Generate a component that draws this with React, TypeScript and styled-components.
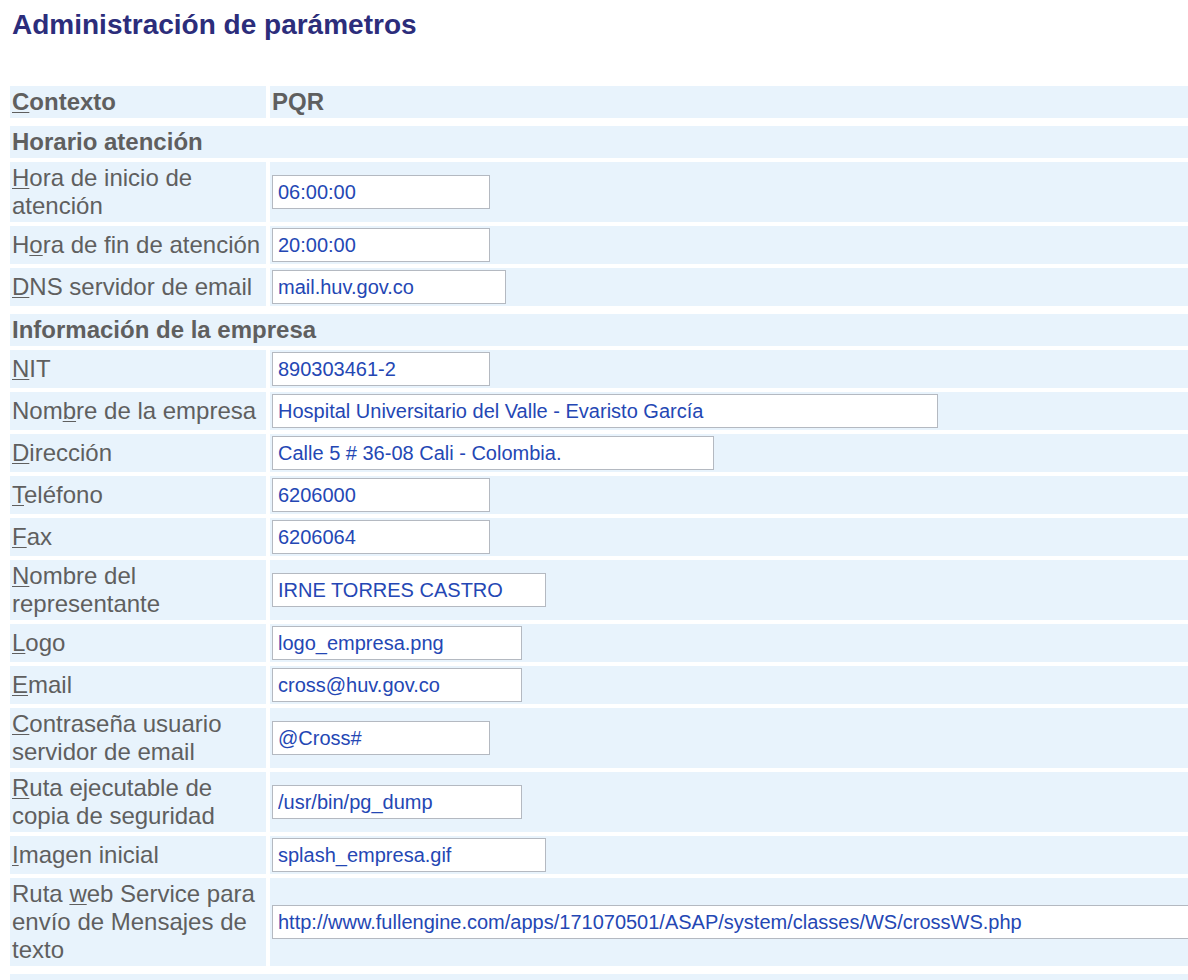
import React from 'react';
import styled, { createGlobalStyle } from 'styled-components';

const Global = createGlobalStyle`
  html, body { margin: 0; padding: 0; background: #ffffff; overflow: hidden; }
  body { font-family: "Liberation Sans", Arial, Helvetica, sans-serif; }
`;

const Page = styled.div`
  width: 1178px;
  height: 980px;
  padding: 9px 0 0 10px;
  overflow: hidden;
`;

const Title = styled.h1`
  margin: 0 0 45px 2px;
  font-size: 28px;
  line-height: 32px;
  font-weight: bold;
  color: #2c2d7b;
`;

const Grid = styled.div`
  display: grid;
  grid-template-columns: 256px minmax(0, 1fr);
  gap: 4px;
  width: 1230px;
`;

const Cell = styled.div<{ $bold?: boolean; $span?: boolean; $section?: boolean }>`
  display: flex;
  align-items: center;
  padding: 2px;
  min-height: 28px;
  background: #e8f3fc;
  color: #5f5f5f;
  font-size: 24px;
  line-height: 28px;
  font-weight: ${(p) => (p.$bold ? 'bold' : 'normal')};
  grid-column: ${(p) => (p.$span ? '1 / -1' : 'auto')};
  margin-top: ${(p) => (p.$section ? '4px' : '0')};
  overflow: hidden;
`;

const Key = styled.span`
  text-decoration: underline;
  text-underline-offset: 2px;
  text-decoration-thickness: 1px;
`;

const Field = styled.input<{ $w: number }>`
  box-sizing: border-box;
  flex: none;
  width: ${(p) => p.$w}px;
  height: 34px;
  margin: 0;
  padding: 0 5px;
  border: 1px solid #b4b9c1;
  border-radius: 0;
  background: #ffffff;
  color: #2447b4;
  font-family: "Liberation Sans", Arial, Helvetica, sans-serif;
  font-size: 20px;
  outline: none;
`;

const Footer = styled.div`
  grid-column: 1 / -1;
  margin-top: 4px;
  height: 40px;
  background: #e8f3fc;
`;

type Row = { pre: string; key: string; post: string; value: string; w: number };

const rowsA: Row[] = [
  { pre: '', key: 'H', post: 'ora de inicio de atención', value: '06:00:00', w: 218 },
  { pre: 'H', key: 'o', post: 'ra de fin de atención', value: '20:00:00', w: 218 },
  { pre: '', key: 'D', post: 'NS servidor de email', value: 'mail.huv.gov.co', w: 234 },
];

const rowsB: Row[] = [
  { pre: '', key: 'N', post: 'IT', value: '890303461-2', w: 218 },
  { pre: 'Nom', key: 'b', post: 're de la empresa', value: 'Hospital Universitario del Valle - Evaristo García', w: 666 },
  { pre: '', key: 'D', post: 'irección', value: 'Calle 5 # 36-08 Cali - Colombia.', w: 442 },
  { pre: '', key: 'T', post: 'eléfono', value: '6206000', w: 218 },
  { pre: '', key: 'F', post: 'ax', value: '6206064', w: 218 },
  { pre: '', key: 'N', post: 'ombre del representante', value: 'IRNE TORRES CASTRO', w: 274 },
  { pre: '', key: 'L', post: 'ogo', value: 'logo_empresa.png', w: 250 },
  { pre: '', key: 'E', post: 'mail', value: 'cross@huv.gov.co', w: 250 },
  { pre: '', key: 'C', post: 'ontraseña usuario servidor de email', value: '@Cross#', w: 218 },
  { pre: '', key: 'R', post: 'uta ejecutable de copia de seguridad', value: '/usr/bin/pg_dump', w: 250 },
  { pre: '', key: 'I', post: 'magen inicial', value: 'splash_empresa.gif', w: 274 },
  {
    pre: 'Ruta ',
    key: 'w',
    post: 'eb Service para envío de Mensajes de texto',
    value: 'http://www.fullengine.com/apps/171070501/ASAP/system/classes/WS/crossWS.php',
    w: 950,
  },
];

const renderRow = (r: Row) => (
  <React.Fragment key={r.pre + r.key + r.post}>
    <Cell>
      <span>
        {r.pre}
        <Key>{r.key}</Key>
        {r.post}
      </span>
    </Cell>
    <Cell>
      <Field $w={r.w} readOnly value={r.value} />
    </Cell>
  </React.Fragment>
);

export default function App() {
  return (
    <Page>
      <Global />
      <Title>Administración de parámetros</Title>
      <Grid>
        <Cell $bold>
          <span>
            <Key>C</Key>ontexto
          </span>
        </Cell>
        <Cell $bold>PQR</Cell>
        <Cell $bold $span $section>
          Horario atención
        </Cell>
        {rowsA.map(renderRow)}
        <Cell $bold $span $section>
          Información de la empresa
        </Cell>
        {rowsB.map(renderRow)}
        <Footer />
      </Grid>
    </Page>
  );
}
